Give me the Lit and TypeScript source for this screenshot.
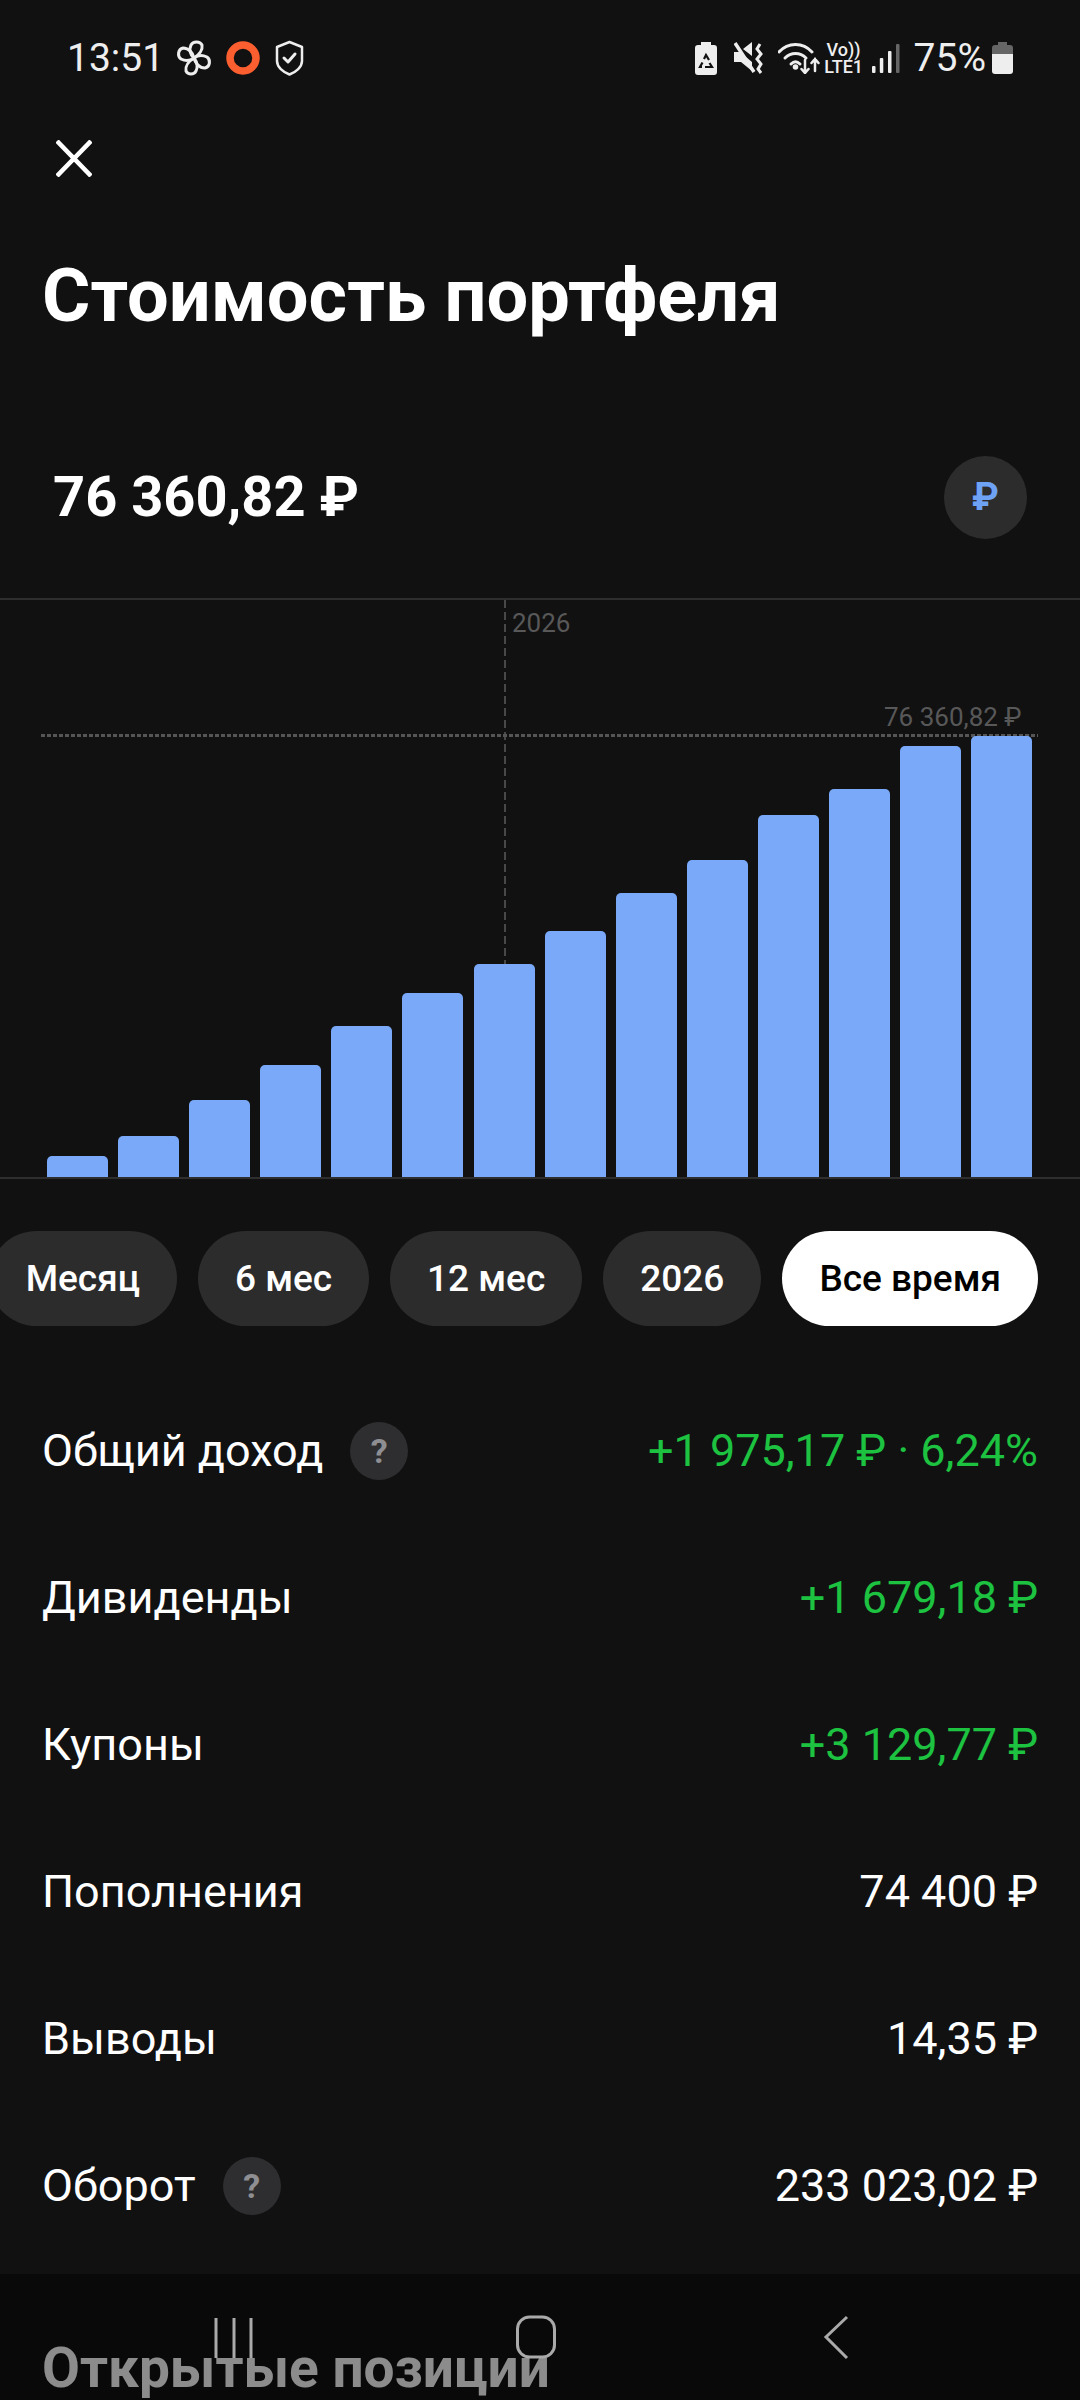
import { LitElement, html, css, svg } from "lit";
import { customElement } from "lit/decorators.js";

const BARS = [21, 41, 77, 112, 151, 184, 213, 246, 284, 317, 362, 388, 431, 441];
const CHIPS = ["Месяц", "6 мес", "12 мес", "2026", "Все время"];
const ROWS = [
  { label: "Общий доход", help: true, value: "+1 975,17 ₽ · 6,24%", green: true },
  { label: "Дивиденды", help: false, value: "+1 679,18 ₽", green: true },
  { label: "Купоны", help: false, value: "+3 129,77 ₽", green: true },
  { label: "Пополнения", help: false, value: "74 400 ₽", green: false },
  { label: "Выводы", help: false, value: "14,35 ₽", green: false },
  { label: "Оборот", help: true, value: "233 023,02 ₽", green: false },
];

@customElement("app-root")
export class AppRoot extends LitElement {
  static styles = css`
    :host { display: block; position: relative; width: 1080px; height: 2400px; overflow: hidden; background: #111112; color: #fff; font-family: Roboto, "Liberation Sans", sans-serif; }
    .status { height: 116px; display: flex; align-items: center; padding: 0 67px 0 67px; box-sizing: border-box; color: #eee; font-size: 39px; }
    .status .time { margin-right: 12px; }
    .status svg { display: block; flex: none; }
    .status .grow { flex: 1; }
    .ml-ring { margin-left: 14px; }
    .ml-shield { margin-left: 15px; }
    .ml-mute { margin-left: 17px; }
    .ml-wifi { margin-left: 14px; }
    .volte { display: flex; flex-direction: column; align-items: center; margin-left: 4px; font-size: 18px; font-weight: 500; line-height: 17px; width: 40px; }
    .ml-signal { margin-left: 8px; }
    .pct { margin-left: 14px; }
    .ml-batt { margin-left: 6px; }
    .close { height: 84px; padding-left: 56px; display: flex; align-items: center; }
    .title { margin: 31px 0 0 42px; height: 130px; line-height: 130px; font-size: 74px; font-weight: 700; }
    .value-row { height: 126px; margin-top: 73px; display: flex; align-items: center; justify-content: space-between; padding: 0 53px 0 53px; }
    .value { font-size: 56px; font-weight: 700; }
    .cur { width: 83px; height: 83px; border-radius: 50%; background: #2c2c2c; display: flex; align-items: center; justify-content: center; color: #6ea2f4; font-size: 38px; font-weight: 700; }
    .chart { position: relative; height: 581px; margin-top: 38px; box-sizing: border-box; border-top: 2px solid #2e2e2e; border-bottom: 2px solid #2e2e2e; display: flex; align-items: flex-end; gap: 10.1px; padding-left: 47px; }
    .bar { position: relative; width: 61px; background: #79a9f8; border-radius: 5px 5px 0 0; flex: none; }
    .vline { position: absolute; left: 504px; top: 0; bottom: 0; width: 2px; background: repeating-linear-gradient(to bottom, #484848 0 8px, transparent 8px 12px); }
    .hline { position: absolute; left: 41px; width: 997px; top: 134px; height: 3px; background: repeating-linear-gradient(to right, #555 0 4px, transparent 4px 6px); }
    .lbl { position: absolute; font-size: 26px; color: #585858; line-height: 30px; }
    .l1 { left: 512px; top: 8px; }
    .l2 { left: 884px; top: 102px; }
    .chips { display: flex; justify-content: flex-end; gap: 21px; margin-top: 52px; padding-right: 42px; }
    .chip { flex: none; height: 95px; box-sizing: border-box; padding: 0 37px; border-radius: 48px; background: #2c2c2c; display: flex; align-items: center; font-size: 37px; font-weight: 500; }
    .chip.on { background: #fff; color: #000; }
    .rows { margin-top: 51px; padding: 0 42px; }
    .row { height: 147px; display: flex; align-items: center; justify-content: space-between; font-size: 45px; }
    .left { display: flex; align-items: center; gap: 27px; }
    .help { width: 58px; height: 58px; border-radius: 50%; background: #2e2e30; color: #8e8e93; display: flex; align-items: center; justify-content: center; font-size: 34px; font-weight: 700; }
    .green { color: #1cc240; }
    .next { margin: 76px 0 0 42px; font-size: 55px; font-weight: 700; line-height: 66px; white-space: nowrap; }
    .nav { position: absolute; left: 0; right: 0; bottom: 0; height: 126px; background: rgba(0,0,0,0.45); }
    .nav svg { position: absolute; left: 0; top: 0; }
  `;

  private leftIcons() {
    return html`
      <svg width="36" height="36" viewBox="0 0 36 36" fill="none" stroke="#eee" stroke-width="3" stroke-linejoin="round">
        <path d="M18 18C14 15 13 9 15 5C17 1 24 1 26 5C27 10 23 15 18 18Z"/>
        <path d="M18 18C22 15 27 15 31 17C35 20 34 27 29 28C23 28 19 23 18 18Z"/>
        <path d="M18 18C21 22 22 27 20 31C18 35 12 35 10 31C9 26 13 21 18 18Z"/>
        <path d="M18 18C14 21 9 21 5 19C1 16 2 9 7 8C13 8 17 13 18 18Z"/>
      </svg>
      <svg class="ml-ring" width="34" height="34" viewBox="0 0 34 34"><circle cx="17" cy="17" r="13" fill="none" stroke="#fb5f2f" stroke-width="7.500"/></svg>
      <svg class="ml-shield" width="29" height="36" viewBox="0 0 29 36" fill="none" stroke="#eee" stroke-width="2.500" stroke-linejoin="round" stroke-linecap="round">
        <path d="M14.500 2L27 7V21C27 27 21 32 14.500 34.500C8 32 2 27 2 21V7Z"/>
        <path d="M9 18L13 22L20 14" stroke-width="3"/>
      </svg>`;
  }

  private rightIcons() {
    return html`
      <svg width="22" height="33" viewBox="0 0 22 33">
        <path fill="#eee" d="M6 0H16V3H19C21 3 22 4 22 6V30C22 32 21 33 19 33H3C1 33 0 32 0 30V6C0 4 1 3 3 3H6Z"/>
        <path fill="none" stroke="#111" stroke-width="2.200" d="M9 17L11 13L14 18M14.500 21L17 25H10M7 25H5L7.500 20.500"/>
      </svg>
      <svg class="ml-mute" width="30" height="32" viewBox="0 0 30 32">
        <path fill="#eee" d="M0 10H6L18 20V29L7 20H0ZM9 7L18 0V14Z"/>
        <path d="M1 1L20 30" stroke="#eee" stroke-width="3.500" fill="none"/>
        <path d="M26 2L23 7L27 12L23 17L27 22L24 27L27 31" stroke="#eee" stroke-width="3" fill="none"/>
      </svg>
      <svg class="ml-wifi" width="42" height="32" viewBox="0 0 42 32" fill="none" stroke="#eee" stroke-width="3" stroke-linecap="round">
        <path d="M1 10C10 0 25 0 34 10"/>
        <path d="M7 16C13 10 22 10 28 16"/>
        <path d="M13 22C16 19 19 19 22 22"/>
        <circle cx="17.500" cy="25" r="1.300" fill="#eee"/>
        <path d="M27 18V31M23.500 27L27 31L30.500 27" stroke-width="2.500"/>
        <path d="M37 29V17M33.500 21L37 17L40.500 21" stroke-width="2.500"/>
      </svg>
      <div class="volte"><span>Vo))</span><span>LTE1</span></div>
      <svg class="ml-signal" width="28" height="29" viewBox="0 0 28 29">
        <rect x="0" y="22" width="3.500" height="7" rx="1" fill="#eee"/>
        <rect x="7.800" y="14" width="3.500" height="15" rx="1" fill="#eee"/>
        <rect x="16" y="7" width="3.500" height="22" rx="1" fill="#eee"/>
        <rect x="24" y="0" width="3.500" height="29" rx="1" fill="#666"/>
      </svg>
      <span class="pct">75%</span>
      <svg class="ml-batt" width="21" height="32" viewBox="0 0 21 32">
        <path fill="#666" d="M6 0H15V3H18C20 3 21 4 21 6V12H0V6C0 4 1 3 3 3H6Z"/>
        <path fill="#eee" d="M0 12H21V29C21 31 20 32 18 32H3C1 32 0 31 0 29Z"/>
      </svg>`;
  }

  render() {
    return html`
      <div class="status">
        <span class="time">13:51</span>
        ${this.leftIcons()}
        <span class="grow"></span>
        ${this.rightIcons()}
      </div>
      <div class="close">
        <svg width="36" height="37" viewBox="0 0 36 37" stroke="#fff" stroke-width="4.500" fill="none"><path d="M1 1L35 36M35 1L1 36"/></svg>
      </div>
      <div class="title">Стоимость портфеля</div>
      <div class="value-row">
        <span class="value">76 360,82 ₽</span>
        <div class="cur">₽</div>
      </div>
      <div class="chart">
        <div class="vline"></div>
        <div class="hline"></div>
        ${BARS.map((h) => html`<div class="bar" style="height:${h}px"></div>`)}
        <span class="lbl l1">2026</span>
        <span class="lbl l2">76 360,82 ₽</span>
      </div>
      <div class="chips">
        ${CHIPS.map((c, i) => html`<div class="chip ${i === 4 ? "on" : ""}">${c}</div>`)}
      </div>
      <div class="rows">
        ${ROWS.map((r) => html`
          <div class="row">
            <div class="left"><span>${r.label}</span>${r.help ? html`<span class="help">?</span>` : ""}</div>
            <span class="${r.green ? "green" : ""}">${r.value}</span>
          </div>`)}
      </div>
      <div class="next">Открытые позиции</div>
      <div class="nav">
        <svg width="1080" height="126" viewBox="0 0 1080 126" fill="none" stroke="#aaa" stroke-width="3">
          ${svg`<path d="M216 44V84M234 44V84M251 44V84"/>
          <rect x="517.500" y="43" width="37" height="40" rx="12"/>
          <path d="M850 43L829 63L850 84" transform="translate(-3 0)"/>`}
        </svg>
      </div>
    `;
  }
}
